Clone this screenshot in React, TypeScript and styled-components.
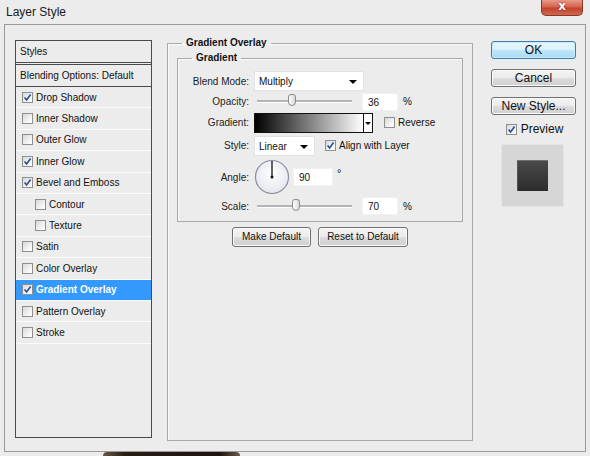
import { createGlobalStyle, styled } from "styled-components";

const GlobalStyle = createGlobalStyle`
  html, body {
    margin: 0;
    padding: 0;
    background: #ececec;
  }
  body {
    font-family: "Liberation Sans", Arial, sans-serif;
    font-size: 10px;
    color: #111;
  }
`;

const styleItems = [
  { label: "Drop Shadow", checked: true },
  { label: "Inner Shadow", checked: false },
  { label: "Outer Glow", checked: false },
  { label: "Inner Glow", checked: true },
  { label: "Bevel and Emboss", checked: true },
  { label: "Contour", checked: false, sub: true },
  { label: "Texture", checked: false, sub: true },
  { label: "Satin", checked: false },
  { label: "Color Overlay", checked: false },
  { label: "Gradient Overlay", checked: true, active: true },
  { label: "Pattern Overlay", checked: false },
  { label: "Stroke", checked: false },
];

function Check({ checked }: { checked: boolean }) {
  return (
    <Box>
      {checked && (
        <svg width="9" height="9" viewBox="0 0 9 9">
          <path
            d="M1.6 4.6 L3.6 7 L7.6 1.6"
            fill="none"
            stroke="#2b4c9b"
            strokeWidth="1.6"
          />
        </svg>
      )}
    </Box>
  );
}

function Slider({ pos }: { pos: number }) {
  return (
    <Track>
      <Thumb style={{ left: `${pos}%` }} />
    </Track>
  );
}

function App() {
  return (
    <>
      <GlobalStyle />
      <Window>
        <TitleBar>
          <Title>Layer Style</Title>
          <CloseBtn>x</CloseBtn>
        </TitleBar>
        <Frame>
          <StyleList>
            <ListHead>Styles</ListHead>
            <BlendRow>Blending Options: Default</BlendRow>
            {styleItems.map((item, idx) => (
              <StyleRow key={idx} $sub={item.sub} $active={item.active}>
                <Check checked={item.checked} />
                <span>{item.label}</span>
              </StyleRow>
            ))}
          </StyleList>

          <Group>
            <Legend>Gradient Overlay</Legend>
            <InnerGroup>
              <InnerLegend>Gradient</InnerLegend>
              <Form>
                <Label>Blend Mode:</Label>
                <Select $w={110}>Multiply</Select>

                <Label>Opacity:</Label>
                <Line>
                  <Slider pos={37} />
                  <NumBox>36</NumBox>
                  <Unit>%</Unit>
                </Line>

                <Label>Gradient:</Label>
                <Line>
                  <GradBar>
                    <GradFill />
                    <GradArrow />
                  </GradBar>
                  <CheckLabel $ml={11}>
                    <Check checked={false} />
                    Reverse
                  </CheckLabel>
                </Line>

                <Label>Style:</Label>
                <Line>
                  <Select $w={61}>Linear</Select>
                  <CheckLabel $ml={10}>
                    <Check checked={true} />
                    Align with Layer
                  </CheckLabel>
                </Line>

                <Label>Angle:</Label>
                <Line>
                  <svg width="36" height="36" viewBox="0 0 36 36">
                    <defs>
                      <radialGradient id="dial" cx="50%" cy="40%" r="60%">
                        <stop offset="0%" stopColor="#ffffff" />
                        <stop offset="100%" stopColor="#e4e6ee" />
                      </radialGradient>
                    </defs>
                    <circle cx="18" cy="18" r="16.5" fill="url(#dial)" stroke="#8a8f9c" strokeWidth="1.2" />
                    <line x1="18" y1="18" x2="18" y2="2" stroke="#111" strokeWidth="1.3" />
                    <circle cx="18" cy="18" r="1.5" fill="#111" />
                  </svg>
                  <NumBox $w={40} $ml={3}>90</NumBox>
                  <Degree>°</Degree>
                </Line>

                <Label>Scale:</Label>
                <Line>
                  <Slider pos={41} />
                  <NumBox>70</NumBox>
                  <Unit>%</Unit>
                </Line>
              </Form>
            </InnerGroup>
            <ButtonRow>
              <Button $w={79}>Make Default</Button>
              <Button $w={90}>Reset to Default</Button>
            </ButtonRow>
          </Group>

          <Side>
            <SideButton $primary>OK</SideButton>
            <SideButton>Cancel</SideButton>
            <SideButton>New Style...</SideButton>
            <PreviewCheck>
              <Check checked={true} />
              Preview
            </PreviewCheck>
            <PreviewBox>
              <PreviewSwatch />
            </PreviewBox>
          </Side>
        </Frame>
        <Footer>
          <BehindShape />
        </Footer>
      </Window>
    </>
  );
}
export default App;

const Window = styled.div`
  width: 590px;
  height: 456px;
  overflow: hidden;
  background: #ececec;
`;
const TitleBar = styled.div`
  display: flex;
  align-items: flex-start;
  height: 24px;
  padding-left: 6px;
  padding-right: 7px;
`;
const Title = styled.div`
  margin-top: 5px;
  font-size: 12px;
  color: #1a1a1a;
`;
const CloseBtn = styled.div`
  margin-left: auto;
  width: 42px;
  height: 16px;
  box-sizing: border-box;
  border: 1px solid #8c3626;
  border-top: none;
  border-radius: 0 0 5px 5px;
  background: linear-gradient(#e99a88, #d4634d 45%, #c2432d 55%, #d0684f);
  color: #fff;
  font: bold 12px "DejaVu Sans", sans-serif;
  line-height: 13px;
  text-align: center;
  text-shadow: 0 0 2px #6a1a10;
`;
const Frame = styled.div`
  display: flex;
  align-items: flex-start;
  margin: 0 4px 0 4px;
  height: 428px;
  box-sizing: border-box;
  border: 1px solid #9a9a9a;
  padding: 12px 0 0 10px;
`;
const StyleList = styled.div`
  width: 137px;
  height: 398px;
  margin-top: 3px;
  box-sizing: border-box;
  border: 1px solid #4a4a4a;
  display: flex;
  flex-direction: column;
`;
const ListHead = styled.div`
  height: 21px;
  line-height: 21px;
  padding-left: 4px;
  border-bottom: 3px double #4a4a4a;
`;
const BlendRow = styled.div`
  height: 21px;
  line-height: 21px;
  padding-left: 4px;
  border-bottom: 1px solid #4a4a4a;
`;
const StyleRow = styled.div<{ $sub?: boolean; $active?: boolean }>`
  display: flex;
  align-items: center;
  gap: 3px;
  height: 20.4px;
  padding-left: ${(p) => (p.$sub ? 19 : 6)}px;
  border-bottom: 1px solid #fbfbfb;
  background: ${(p) => (p.$active ? "#3399ff" : "transparent")};
  color: ${(p) => (p.$active ? "#fff" : "#111")};
  font-weight: ${(p) => (p.$active ? "bold" : "normal")};
`;
const Box = styled.span`
  display: inline-flex;
  align-items: center;
  justify-content: center;
  flex: none;
  width: 11px;
  height: 11px;
  box-sizing: border-box;
  border: 1px solid #8e8f8f;
  background: linear-gradient(135deg, #d8d8d8, #f6f6f6 70%, #fff);
`;
const Group = styled.fieldset`
  margin: 0 0 0 15px;
  width: 306px;
  height: 404px;
  box-sizing: border-box;
  border: 1px solid #a9a9a9;
  box-shadow: inset 1px 1px 0 #fafafa;
  padding: 3px 9px 0 9px;
`;
const Legend = styled.legend`
  margin-left: 5px;
  padding: 0 4px;
  font-weight: bold;
  line-height: 12px;
`;
const InnerGroup = styled.fieldset`
  margin: 0;
  padding: 0 0 5px 0;
  border: 1px solid #a9a9a9;
  box-shadow: inset 1px 1px 0 #fafafa;
`;
const InnerLegend = styled.legend`
  margin-left: 14px;
  padding: 0 4px;
  font-weight: bold;
  line-height: 12px;
`;
const Form = styled.div`
  display: grid;
  grid-template-columns: 71px 1fr;
  grid-template-rows: 20px 21px 21px 25px 38px 20px;
  column-gap: 5px;
  align-items: center;
  padding-top: 7px;
`;
const Label = styled.div`
  text-align: right;
  color: #222;
`;
const Line = styled.div`
  display: flex;
  align-items: center;
`;
const Select = styled.div<{ $w: number }>`
  position: relative;
  width: ${(p) => p.$w}px;
  height: 20px;
  box-sizing: border-box;
  line-height: 20px;
  padding-left: 4px;
  background: #fff;
  border: 1px solid #e2e2e2;
  &::after {
    content: "";
    position: absolute;
    right: 6px;
    top: 8px;
    border-left: 4px solid transparent;
    border-right: 4px solid transparent;
    border-top: 4px solid #000;
  }
`;
const Track = styled.div`
  position: relative;
  margin-left: 3px;
  width: 95px;
  height: 2px;
  background: #b4b4b4;
  border-bottom: 1px solid #fff;
`;
const Thumb = styled.span`
  position: absolute;
  top: -6px;
  width: 8px;
  height: 12px;
  margin-left: -4px;
  box-sizing: border-box;
  border: 1px solid #8a8a8a;
  border-radius: 3px 3px 4px 4px;
  background: linear-gradient(90deg, #fdfdfd, #d9d9d9);
`;
const NumBox = styled.div<{ $w?: number; $ml?: number }>`
  width: ${(p) => p.$w ?? 36}px;
  height: 18px;
  margin-left: ${(p) => p.$ml ?? 10}px;
  box-sizing: border-box;
  line-height: 18px;
  padding-left: 5px;
  background: #fff;
  border: 1px solid #f2f2f2;
`;
const Unit = styled.span`
  margin-left: 5px;
`;
const Degree = styled.span`
  margin-left: 4px;
  margin-top: -8px;
  font-size: 11px;
`;
const GradBar = styled.div`
  display: flex;
  width: 119px;
  height: 20px;
  box-sizing: border-box;
  border: 1px solid #111;
  background: #fff;
`;
const GradFill = styled.div`
  flex: 1;
  background: linear-gradient(90deg, #000, #fff);
  border-right: 1px solid #111;
`;
const GradArrow = styled.div`
  position: relative;
  width: 8px;
  &::after {
    content: "";
    position: absolute;
    left: 1px;
    top: 8px;
    border-left: 3px solid transparent;
    border-right: 3px solid transparent;
    border-top: 3px solid #000;
  }
`;
const CheckLabel = styled.label<{ $ml: number }>`
  display: flex;
  align-items: center;
  gap: 3px;
  margin-left: ${(p) => p.$ml}px;
`;
const ButtonRow = styled.div`
  display: flex;
  justify-content: center;
  gap: 7px;
  margin-top: 5px;
`;
const Button = styled.div<{ $w: number }>`
  width: ${(p) => p.$w}px;
  height: 20px;
  box-sizing: border-box;
  line-height: 18px;
  text-align: center;
  border: 1px solid #707070;
  border-radius: 3px;
  background: linear-gradient(#f4f4f4, #ebebeb 50%, #dddddd 51%, #cfcfcf);
  box-shadow: inset 0 0 0 1px #fbfbfb;
`;
const Side = styled.div`
  display: flex;
  flex-direction: column;
  align-items: center;
  width: 85px;
  margin-left: 18px;
  margin-top: 4px;
  font-size: 12px;
`;
const SideButton = styled.div<{ $primary?: boolean }>`
  width: 85px;
  height: 18px;
  box-sizing: border-box;
  margin-bottom: 10px;
  line-height: 16px;
  text-align: center;
  border: 1px solid ${(p) => (p.$primary ? "#3c7fb1" : "#707070")};
  border-radius: 3px;
  background: ${(p) =>
    p.$primary
      ? "linear-gradient(#eaf6fd, #d9f0fc 50%, #bee6fd 51%, #a7d9f5)"
      : "linear-gradient(#f4f4f4, #ebebeb 50%, #dddddd 51%, #cfcfcf)"};
  box-shadow: inset 0 0 0 1px ${(p) => (p.$primary ? "#c6ebfb" : "#fbfbfb")};
`;
const PreviewCheck = styled.label`
  display: flex;
  align-items: center;
  gap: 4px;
  margin-top: -3px;
  margin-left: 2px;
`;
const PreviewBox = styled.div`
  display: flex;
  align-items: center;
  justify-content: center;
  width: 63px;
  height: 63px;
  margin-top: 8px;
  margin-left: -2px;
  box-sizing: border-box;
  border: 1px solid #e4e4e4;
  background: #d6d6d6;
`;
const PreviewSwatch = styled.div`
  width: 31px;
  height: 30px;
  background: linear-gradient(#4a4a4a, #2c2c2c);
  border-top: 1px solid #707070;
  box-shadow: inset 1px 0 0 #555;
`;
const Footer = styled.div`
  height: 4px;
  display: flex;
`;
const BehindShape = styled.div`
  margin-left: 103px;
  width: 137px;
  height: 4px;
  border-radius: 6px 6px 0 0;
  background: linear-gradient(90deg, #6a5a48, #2a1e14 15%, #1e140c 85%, #6a5a48);
`;
